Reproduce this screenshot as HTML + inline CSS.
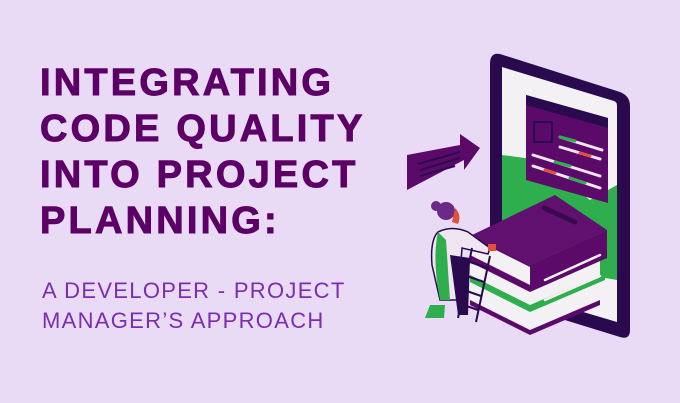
<!DOCTYPE html>
<html><head><meta charset="utf-8"><style>
html,body{margin:0;padding:0}
body{width:680px;height:403px;background:#e9dbf5;position:relative;overflow:hidden;font-family:"Liberation Sans",sans-serif}
.t{position:absolute;left:40px;top:60px;color:#5c0067;font-weight:bold;font-size:38px;line-height:46px;letter-spacing:3.2px;white-space:nowrap;-webkit-text-stroke:1px #5c0067}
.s{position:absolute;left:42px;top:276px;color:#7a2db0;font-size:22px;line-height:30px;letter-spacing:1.3px;white-space:nowrap}
svg{position:absolute;left:0;top:0}
</style></head><body>
<div class="t">INTEGRATING<br>CODE QUALITY<br>INTO PROJECT<br>PLANNING:</div>
<div class="s">A DEVELOPER - PROJECT<br>MANAGER’S APPROACH</div>
<svg width="680" height="403" viewBox="0 0 680 403">
<path d="M500 54 L620 92 Q630 96 630 106 L630 330 Q630 340 620 337 L500 300 Q490 297 490 287 L490 64 Q490 52 500 54Z" fill="#2a0a4e"/>
<path d="M502 67 L614 101 Q617 102 617 106 L617 322 L502 288Z" fill="#f3f1f3"/>
<path d="M502 155 L540 160 L590 200 L617 185 L617 280 L502 260Z" fill="#2fae4e"/>
<path d="M526 95 L608 118 L608 203 L526 180Z" fill="#5c0a6a"/>
<path d="M526 95 L608 118 L608 128 L526 105Z" fill="#2a0a4e"/>
<rect x="534" y="122" width="18" height="20" fill="none" stroke="#2a0a4e" stroke-width="2"/>
<g stroke-width="3" stroke-linecap="round">
<line x1="560" y1="137" x2="602" y2="150" stroke="#f0e6f0"/>
<line x1="560" y1="137" x2="575" y2="141" stroke="#2fae4e"/>
<line x1="560" y1="147" x2="600" y2="159" stroke="#f0e6f0"/>
<line x1="580" y1="153" x2="590" y2="156" stroke="#e0503a"/>
<line x1="533" y1="155" x2="600" y2="176" stroke="#f0e6f0"/>
<line x1="555" y1="162" x2="570" y2="166" stroke="#2fae4e"/>
<line x1="533" y1="166" x2="600" y2="188" stroke="#f0e6f0"/>
<line x1="545" y1="170" x2="555" y2="173" stroke="#e0503a"/>
<line x1="570" y1="178" x2="585" y2="183" stroke="#2fae4e"/>
</g>
<path d="M470 285 L530 315 L600 285 L600 305 L530 335 L470 305Z" fill="#5c0a6a"/>
<path d="M470 280 L530 310 L600 280 L600 300 L530 330 L470 300Z" fill="#f3f1f3"/>
<path d="M470 260 L530 290 L605 255 L605 280 L530 312 L470 282Z" fill="#2fae4e"/>
<path d="M470 258 L530 288 L600 258 L600 275 L530 305 L470 275Z" fill="#f3f1f3"/>
<path d="M470 235 L530 265 L607 230 L607 258 L530 292 L470 262Z" fill="#5c0a6a"/>
<path d="M470 237 L530 267 L530 285 L470 255Z" fill="#f3f1f3"/>
<path d="M470 236 L555 195 L607 230 L530 265Z" fill="#62106f"/>
<line x1="544" y1="208" x2="575" y2="222" stroke="#3a0a50" stroke-width="5" stroke-linecap="round"/>
<g stroke="#f3f1f3" stroke-width="2.5" stroke-linecap="round">
<line x1="545" y1="280" x2="600" y2="255"/><line x1="545" y1="300" x2="600" y2="276"/><line x1="545" y1="318" x2="600" y2="294"/>
</g>
<path d="M407 155 L460 145 L460 134 L480 148 L464 170 L464 160 L407 190Z" fill="#5c0a6a"/>
<g stroke="#2a0a4e" stroke-width="2"><line x1="418" y1="164" x2="460" y2="152"/><line x1="420" y1="170" x2="460" y2="158"/><line x1="420" y1="176" x2="455" y2="166"/></g>
<circle cx="446" cy="211" r="9" fill="#6b2a8a"/><circle cx="436" cy="206" r="5" fill="#6b2a8a"/>
<path d="M455 208 Q462 215 458 224 L452 222Z" fill="#e0503a"/>
<path d="M438 232 Q452 225 468 232 L490 248 L488 254 L462 248 L458 300 L440 300 L432 265 Q430 240 438 232Z" fill="#efe6f2" stroke="#2a0a4e" stroke-width="1.5"/>
<path d="M438 232 Q432 260 440 300 L450 300 L446 240Z" fill="#2fae4e"/>
<path d="M450 255 L470 258 L468 315 L458 315Z" fill="#2a0a4e"/>
<path d="M430 305 L445 305 L444 318 L425 318Z" fill="#2fae4e"/>
<rect x="488" y="244" width="8" height="7" fill="#e0503a"/>
<g stroke="#2a0a4e" stroke-width="2"><line x1="472" y1="248" x2="458" y2="318"/><line x1="490" y1="256" x2="476" y2="322"/>
<line x1="470" y1="262" x2="487" y2="268"/><line x1="467" y1="276" x2="484" y2="282"/><line x1="464" y1="290" x2="481" y2="296"/><line x1="461" y1="304" x2="478" y2="310"/></g>
</svg>
</body></html>
